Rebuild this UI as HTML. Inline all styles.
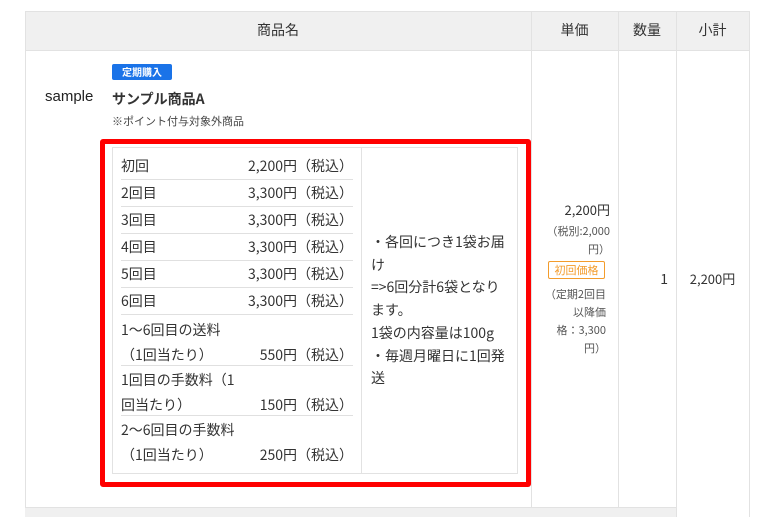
<!DOCTYPE html>
<html><head><meta charset="utf-8"><style>
*{margin:0;padding:0;box-sizing:border-box}
body{width:763px;height:517px;background:#fff;position:relative;overflow:hidden;font-family:"Noto Sans CJK JP","Liberation Sans",sans-serif;color:#333;font-size:14px}
.a{position:absolute}
.vl{position:absolute;width:1px;background:#e2e2e2}
.row{position:absolute;left:121px;width:232px;height:27px;line-height:27px;border-bottom:1px solid #e0e0e0;white-space:nowrap}
.row span{position:absolute;right:0;top:0}
</style></head><body>
<div class="a" style="left:25px;top:11px;width:725px;height:40px;background:#f0f0f0;border:1px solid #e2e2e2"></div>
<div class="a" style="left:25px;top:507px;width:652px;height:10px;background:#f0f0f0;border-top:1px solid #e2e2e2"></div>
<div class="vl" style="left:25px;top:11px;height:496px"></div>
<div class="vl" style="left:531px;top:11px;height:496px"></div>
<div class="vl" style="left:618px;top:11px;height:496px"></div>
<div class="vl" style="left:676px;top:11px;height:506px"></div>
<div class="vl" style="left:749px;top:11px;height:506px"></div>
<div class="a" style="left:25px;top:20px;width:506px;text-align:center;line-height:20px">商品名</div>
<div class="a" style="left:531px;top:20px;width:87px;text-align:center;line-height:20px">単価</div>
<div class="a" style="left:618px;top:20px;width:58px;text-align:center;line-height:20px">数量</div>
<div class="a" style="left:676px;top:20px;width:73px;text-align:center;line-height:20px">小計</div>

<div class="a" style="left:45px;top:88px;font-size:15px;color:#222;font-family:'Liberation Sans',sans-serif">sample</div>
<div class="a" style="left:112px;top:64px;width:60px;height:16px;background:#1a73e8;border-radius:2px;color:#fff;font-size:10px;font-weight:bold;text-align:center;line-height:16px">定期購入</div>
<div class="a" style="left:112px;top:88px;font-size:14px;font-weight:bold;line-height:22px">サンプル商品A</div>
<div class="a" style="left:112px;top:113px;font-size:11px;color:#444;line-height:16px">※ポイント付与対象外商品</div>

<div class="a" style="left:100px;top:139px;width:431px;height:348px;border:5px solid #f00;border-radius:3px"></div>
<div class="a" style="left:112px;top:147px;width:406px;height:327px;border:1px solid #e2e2e2"></div>
<div class="vl" style="left:361px;top:147px;height:327px"></div>

<div class="row" style="top:153px">初回<span>2,200円（税込）</span></div>
<div class="row" style="top:180px">2回目<span>3,300円（税込）</span></div>
<div class="row" style="top:207px">3回目<span>3,300円（税込）</span></div>
<div class="row" style="top:234px">4回目<span>3,300円（税込）</span></div>
<div class="row" style="top:261px">5回目<span>3,300円（税込）</span></div>
<div class="row" style="top:288px">6回目<span>3,300円（税込）</span></div>
<div class="row" style="top:316px;height:50px;line-height:25px;padding-top:2px">1〜6回目の送料<br>（1回当たり）<span style="top:27px">550円（税込）</span></div>
<div class="row" style="top:366px;height:50px;line-height:25px;padding-top:2px">1回目の手数料（1<br>回当たり）<span style="top:27px">150円（税込）</span></div>
<div class="row" style="top:416px;height:50px;line-height:25px;padding-top:2px;border-bottom:none">2〜6回目の手数料<br>（1回当たり）<span style="top:27px">250円（税込）</span></div>

<div class="a" style="left:371px;top:231px;width:142px;line-height:22.7px">・各回につき1袋お届<br>け<br>=&gt;6回分計6袋となり<br>ます。<br>1袋の内容量は100g<br>・毎週月曜日に1回発<br>送</div>

<div class="a" style="left:538px;top:200px;width:72px;text-align:right;line-height:20px;font-size:13px">2,200円</div>
<div class="a" style="left:538px;top:222px;width:72px;text-align:right;line-height:18px;font-size:11px;color:#555">（税別:2,000<br>円）</div>
<div class="a" style="left:548px;top:261px;width:57px;height:18px;border:1px solid #f39c2c;border-radius:2px;color:#f39c2c;font-size:11px;text-align:center;line-height:16px">初回価格</div>
<div class="a" style="left:540px;top:285px;width:66px;text-align:right;line-height:18px;font-size:11px;color:#555">（定期2回目<br>以降価<br>格：3,300<br>円）</div>
<div class="a" style="left:618px;top:269px;width:50px;text-align:right;line-height:20px">1</div>
<div class="a" style="left:676px;top:269px;width:73px;text-align:center;line-height:20px;font-size:13px">2,200円</div>
</body></html>
